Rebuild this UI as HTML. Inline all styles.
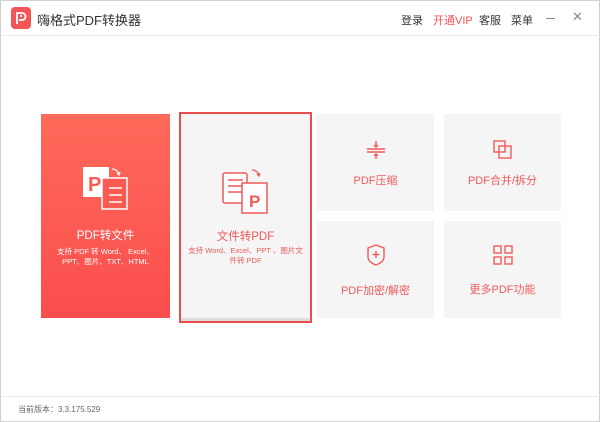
<!DOCTYPE html>
<html><head><meta charset="utf-8"><style>
*{margin:0;padding:0;box-sizing:border-box}
body{width:600px;height:422px;background:#fff;font-family:"Liberation Sans","Noto Sans CJK SC",sans-serif;position:relative;overflow:hidden;border:1px solid #d0d0d0}
.abs{position:absolute}
.card{position:absolute;background:#f5f5f5;color:#f05a5a;font-size:11px;text-align:center}
</style></head><body>
<div class="abs" style="left:0;top:34px;width:600px;height:1px;background:#ececec"></div>
<svg class="abs" style="left:10px;top:6px" width="20" height="22"><rect width="20" height="22" rx="4" fill="#f25656"/><path d="M6 17V6h5a3.5 3.5 0 0 1 0 7H8M9 9h2" stroke="#fff" stroke-width="1.8" fill="none"/></svg>
<div class="abs" style="left:36px;top:9px;font-size:13px;color:#333">嗨格式PDF转换器</div>
<div class="abs" style="left:400px;top:11px;font-size:11px;color:#333">登录</div>
<div class="abs" style="left:432px;top:11px;font-size:11px;color:#f25656">开通VIP</div>
<div class="abs" style="left:478px;top:11px;font-size:11px;color:#333">客服</div>
<div class="abs" style="left:510px;top:11px;font-size:11px;color:#333">菜单</div>
<div class="abs" style="left:545px;top:17px;width:9px;height:1px;background:#888"></div>
<div class="abs" style="left:571px;top:8px;font-size:13px;color:#888">✕</div>

<div class="abs" style="left:40px;top:113px;width:129px;height:204px;background:linear-gradient(#fe6a5a,#fb4d4d);color:#fff;text-align:center">
<svg style="position:absolute;left:40px;top:50px" width="48" height="46"><rect x="2" y="3" width="26" height="30" fill="#fff"/><text x="7" y="27" font-size="20" font-weight="bold" fill="#fb5a52" font-family="Liberation Sans">P</text><rect x="21" y="14" width="25" height="31" fill="#fb5a52" stroke="#fff" stroke-width="1.5"/><path d="M28 24h13M28 31h13M28 38h13" stroke="#fff" stroke-width="1.6"/><path d="M31 5q5 0 7 5M36 9l2 2 1-3" stroke="#fff" stroke-width="1.3" fill="none"/></svg>
<div style="position:absolute;top:113px;width:100%;font-size:11.5px">PDF转文件</div>
<div style="position:absolute;top:133px;left:6px;right:6px;font-size:7.5px;line-height:10px">支持 PDF 转 Word、 Excel、PPT、图片、TXT、HTML</div>
</div>

<div class="card" style="left:178px;top:111px;width:133px;height:211px;border:2px solid #e84e4e">
<div class="abs" style="left:0;right:0;bottom:0;height:3px;background:#ddd"></div>
<svg style="position:absolute;left:40px;top:52px" width="50" height="50"><rect x="2" y="7" width="24" height="30" rx="2" fill="#fff" stroke="#f05a5a" stroke-width="1.5"/><path d="M7 14h15M7 20h15M7 26h15" stroke="#f05a5a" stroke-width="1.6"/><rect x="21" y="17" width="25" height="30" fill="#fff" stroke="#f05a5a" stroke-width="1.5"/><text x="28" y="41" font-size="17" font-weight="bold" fill="#f05a5a" font-family="Liberation Sans">P</text><path d="M31 4q5 0 7 5M36 8l2 2 1-3" stroke="#f05a5a" stroke-width="1.3" fill="none"/></svg>
<div style="position:absolute;top:114px;width:100%;font-size:11.5px">文件转PDF</div>
<div style="position:absolute;top:132px;left:6px;right:6px;font-size:7.5px;line-height:10px">支持 Word、Excel、PPT 、图片文件转 PDF</div>
</div>

<div class="card" style="left:316px;top:113px;width:117px;height:97px">
<svg class="abs" style="left:49px;top:26px" width="20" height="20" stroke="#f05a5a" fill="none" stroke-width="1.4"><path d="M1 9h18M1 12h18M10 1v6M8 5l2 2 2-2M10 19v-5M8 16l2-2 2 2"/></svg>
<div style="position:absolute;top:58px;width:100%">PDF压缩</div></div>
<div class="card" style="left:443px;top:113px;width:117px;height:97px">
<svg class="abs" style="left:49px;top:26px" width="20" height="20" stroke="#f05a5a" fill="none" stroke-width="1.4"><rect x="1" y="1" width="11" height="11"/><rect x="6" y="6" width="12" height="12"/></svg>
<div style="position:absolute;top:58px;width:100%">PDF合并/拆分</div></div>
<div class="card" style="left:316px;top:220px;width:117px;height:97px">
<svg class="abs" style="left:50px;top:23px" width="18" height="22" stroke="#f05a5a" fill="none" stroke-width="1.4"><path d="M1 4l8-3 8 3v9q0 5-8 8q-8-3-8-8z M9 7v7M5.5 10.5h7"/></svg>
<div style="position:absolute;top:61px;width:100%">PDF加密/解密</div></div>
<div class="card" style="left:443px;top:220px;width:117px;height:97px">
<svg class="abs" style="left:49px;top:24px" width="20" height="20" stroke="#f05a5a" fill="none" stroke-width="1.4"><rect x="1" y="1" width="7" height="7"/><rect x="12" y="1" width="7" height="7"/><rect x="1" y="12" width="7" height="7"/><rect x="12" y="12" width="7" height="7"/></svg>
<div style="position:absolute;top:60px;width:100%">更多PDF功能</div></div>

<div class="abs" style="left:0;top:395px;width:600px;height:1px;background:#ececec"></div>
<div class="abs" style="left:17px;top:403px;font-size:8px;color:#666">当前版本：3.3.175.529</div>
</body></html>
